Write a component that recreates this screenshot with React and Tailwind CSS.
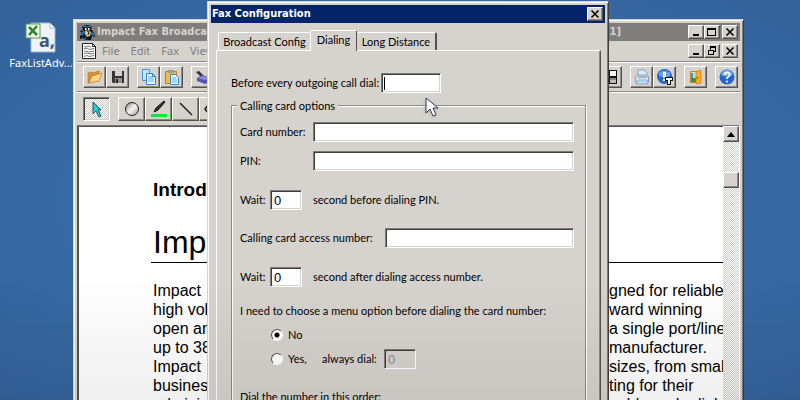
import React from 'react';

const raised = 'border border-t-white border-l-white border-r-[#55524f] border-b-[#55524f] shadow-[inset_-1px_-1px_0_#8c8986] bg-[#d6d3ce]';
const sunken = 'border border-t-[#7d7a78] border-l-[#7d7a78] border-r-white border-b-white shadow-[inset_1px_1px_0_#403d3d,inset_-1px_-1px_0_#d6d3ce]';
const dialogText = "font-['Lato','Liberation_Sans',sans-serif] text-[11px] leading-4 whitespace-nowrap";
const titleText = "font-['DejaVu_Sans_Condensed','DejaVu_Sans',sans-serif] text-[11px] font-bold";
const checker = 'bg-[repeating-conic-gradient(#ffffff_0_25%,#cfccc7_0_50%)] bg-[length:2px_2px]';

const leftLines = ['Impact', 'high volume', 'open and', 'up to 384', 'Impact', 'business', 'administrative'];
const rightLines = ['gned for reliable', 'ward winning', 'a single port/line', 'manufacturer.', 'sizes, from small', 'ting for their', 'eable and reliable'];

function WindowButton({ label, children }) {
  return (
    <button aria-label={label} className={`flex h-[14px] w-4 items-center justify-center ${raised}`}>
      <svg width="12" height="12" viewBox="0 0 12 12" fill="none" stroke="#000" shapeRendering="crispEdges">{children}</svg>
    </button>
  );
}

const minimize = <path d="M3 9h6" strokeWidth="2" />;
const maximize = <path d="M1 2h9M1.5 2v8M9.5 2v8M1 9.5h9M1 3h9" />;
const restore = <path d="M4 1.5h6M4 2.5h6M4.5 2v3M9.5 2v5M8 6.500h2M2 5.5h6M2.500 5v5M7.500 5v5M2 9.500h6" />;
const cross = <path d="M2.500 2.500l7 7M9.500 2.500l-7 7" strokeWidth="1.600" shapeRendering="auto" />;

function ToolButton({ label, children }) {
  return (
    <button aria-label={label} className={`flex h-[22px] w-[23px] shrink-0 items-center justify-center ${raised}`}>
      <svg width="16" height="16" viewBox="0 0 16 16">{children}</svg>
    </button>
  );
}

function DrawButton({ label, active, children }) {
  return (
    <button aria-label={label} className={`flex h-6 w-[27px] shrink-0 items-center justify-center ${active ? `${sunken} ${checker}` : raised}`}>
      <svg width="18" height="18" viewBox="0 0 18 18">{children}</svg>
    </button>
  );
}

function Document() {
  return (
    <div className="flex min-h-0 grow border border-t-[#7d7a78] border-l-[#55524f] border-r-white border-b-white bg-white shadow-[inset_1px_1px_0_#55524f]">
      <div className="min-w-0 grow overflow-hidden pt-[54px] pl-[75px] font-['Liberation_Sans',Arial,sans-serif] text-black">
        <h2 className="text-[19px] leading-5 font-bold">Introduction</h2>
        <h1 className="-ml-0.5 mt-[25px] border-b border-black pb-[3px] pl-0.5 text-[32px] leading-[34px]">Impact Fax</h1>
        <div className="mt-[18px] flex whitespace-nowrap text-base leading-[19px]">
          <div className="w-[456px] shrink-0">
            {leftLines.map((line, i) => <p key={i}>{line}</p>)}
          </div>
          <div>
            {rightLines.map((line, i) => <p key={i}>{line}</p>)}
          </div>
        </div>
      </div>
      <div className={`flex w-4 shrink-0 flex-col ${checker}`}>
        <button aria-label="Scroll up" className={`flex h-4 w-4 items-center justify-center ${raised}`}>
          <svg width="8" height="5" viewBox="0 0 8 5"><path d="M4 0l4 5H0z" /></svg>
        </button>
        <div className={`mt-[30px] h-4 w-4 ${raised}`} />
      </div>
    </div>
  );
}

function FaxWindow() {
  return (
    <div className="absolute top-[19px] right-14 -bottom-6 left-[73px] flex flex-col border border-t-[#d6d3ce] border-l-[#d6d3ce] border-r-[#403d3d] border-b-[#403d3d] bg-[#d6d3ce] p-[3px] shadow-[inset_1px_1px_0_#fff,inset_-1px_-1px_0_#7d7a78]">
      <div className={`flex h-[18px] shrink-0 items-center bg-[#807d7d] pl-0.5 text-[#d6d3ce] ${titleText}`}>
        <svg width="17" height="17" viewBox="0 0 17 17" className="mr-px">
          <path d="M3 2l5-1 5 1-1 3 3 4 1 4-3-1-1 4H6l-2-2-3 1 0-3 2-2-2-3 3-1z" fill="#0b1722" />
          <path d="M2 9l3-3 1 3-3 3zM12 8l3 1v3l-3-1zM6 13l2 2-3 1z" fill="#1472b8" />
          <path d="M6 4h2v2H6zM9 4h2v2H9z" fill="#fff" />
          <path d="M6 7l3-1 3 2-1 4-3 1-2-3z" fill="#dbc779" />
          <path d="M8 7l2 1-1 3M7 5h1M10 5h1" stroke="#141414" fill="none" />
          <path d="M3 2l5 1 5-1" stroke="#3e87aa" fill="none" />
        </svg>
        <span className="grow whitespace-nowrap">Impact Fax Broadcast</span>
        <span className="mr-[67px]">[1]</span>
        <div className="mr-0.5 flex">
          <WindowButton label="Minimize">{minimize}</WindowButton>
          <WindowButton label="Maximize">{maximize}</WindowButton>
          <span className="w-0.5" />
          <WindowButton label="Close">{cross}</WindowButton>
        </div>
      </div>
      <div className="flex h-[21px] shrink-0 items-center border-b border-[#8c8986] pl-[5px] font-['Noto_Sans',sans-serif] text-[11px] text-[#807d7d]">
        <svg width="14" height="16" viewBox="0 0 14 16" className="mr-[6px]">
          <path d="M.5.5h10l3 3v12H.5z" fill="#fff" stroke="#222" />
          <path d="M10.500.5v3h3" fill="none" stroke="#222" />
          <path d="M2 3.500l2 .5 2-1 3 1M2 6l3-1 2 1.500 5-1M2 8.500l2-.5 3 1 5-1M2 11l3-1 3 1 4-1M2 13.500l3-1 2 1 5-1" fill="none" stroke="#777" />
        </svg>
        <button className="mr-[11px]">File</button>
        <button className="mr-[11px]">Edit</button>
        <button className="mr-[11px]">Fax</button>
        <button>View</button>
        <div className="mr-0.5 ml-auto flex">
          <WindowButton label="Minimize document">{minimize}</WindowButton>
          <WindowButton label="Restore document">{restore}</WindowButton>
          <span className="w-0.5" />
          <WindowButton label="Close document">{cross}</WindowButton>
        </div>
      </div>
      <div className="flex h-[30px] shrink-0 items-center border-t border-b border-t-white border-b-[#8c8986] pr-0.5 pl-[6px]">
        <ToolButton label="Open">
          <path d="M1 4l4-1 1 1 6-2v3l-8 2-2 7H1z" fill="#d89632" stroke="#a96e20" strokeWidth=".6" />
          <path d="M2 14L5 7l10-3-3 8z" fill="#ffd58b" stroke="#c27d20" strokeWidth=".8" />
        </ToolButton>
        <ToolButton label="Save">
          <path d="M2 2h12v12H3l-1-1z" fill="#343434" />
          <path d="M5 2h7v5H5z" fill="#d1d1d1" /><path d="M5 9h7v5H5z" fill="#919191" /><path d="M6 10h2v4H6z" fill="#222" />
        </ToolButton>
        <span className="w-2" />
        <ToolButton label="Copy">
          <path d="M1.500.5h7v11h-7z" fill="#bfe4fb" stroke="#489ad2" />
          <path d="M5.500 4.500h6l3 3v8h-9z" fill="#e1f4ff" stroke="#2d86cc" />
          <path d="M7 8h5M7 10h6M7 12h6" stroke="#69afe0" /><path d="M11.500 4.500v3h3" fill="none" stroke="#2d86cc" />
        </ToolButton>
        <ToolButton label="Paste">
          <path d="M1.500 2.500h11v12h-11z" fill="#f4b93e" stroke="#b8822a" />
          <path d="M4 1h6v3H4z" fill="#8e9bad" />
          <path d="M6.500 5.500h5l3 3v7h-8z" fill="#e1f4ff" stroke="#3687c9" /><path d="M8 9h4M8 11h5M8 13h5" stroke="#69afe0" />
        </ToolButton>
        <span className="w-2" />
        <ToolButton label="Send fax">
          <path d="M1 3l3-1 5 5-2 2z" fill="#333" /><path d="M2 9l5-3 9 3v4l-6 2-8-3z" fill="#5755b0" /><path d="M3 9l5-2 6 2-4 2z" fill="#918fd6" /><path d="M12 12h2v1h-2z" fill="#e33" />
        </ToolButton>
        <span className="grow" />
        <ToolButton label="Contrast">
          <path d="M5 1h9v14H5z" fill="#111" /><path d="M7 2h6v5H7z" fill="#fff" /><path d="M7 9h6v2H7z" fill="#888" /><path d="M7 11h6v3H7z" fill="#bbb" />
        </ToolButton>
        <span className="w-2" />
        <ToolButton label="Print">
          <path d="M4 8V1h6l3 3v4" fill="#d8edff" stroke="#7da9d1" /><path d="M1.500 8l2-2h9l2 2v5h-13z" fill="#dce3e9" stroke="#8a99a9" />
          <path d="M4 8h9" stroke="#6683a2" /><path d="M4 11h9l1 4H2z" fill="#b6dcf8" stroke="#7b98b1" strokeWidth=".7" />
        </ToolButton>
        <ToolButton label="Fax information">
          <circle cx="7.500" cy="7.500" r="7.500" fill="#2868ca" /><path d="M2 4q5-5 11 0v3q-5 2-11 0z" fill="#6aa6ee" />
          <path d="M6 3h3v6H6zM6 10h3v2H6z" fill="#fff" /><path d="M8 8h8v4h-2v4h-4v-4H8z" fill="#111" /><path d="M9 9h6v2h-2v4h-2v-4H9z" fill="#fff" />
        </ToolButton>
        <span className="w-2" />
        <ToolButton label="Exit">
          <path d="M2.500 2.500h7v11h-7z" fill="#b9e3ef" stroke="#c78622" /><path d="M3 9h5v4H3z" fill="#37983c" /><path d="M3 4h2v5H3z" fill="#478fcf" />
          <path d="M8 3l5-2v13l-5 1z" fill="#ffad1d" stroke="#c47a0d" strokeWidth=".7" /><path d="M9 8h1v2H9z" fill="#794900" />
        </ToolButton>
        <span className="w-2" />
        <ToolButton label="Help">
          <circle cx="8" cy="8" r="7.500" fill="#2566ca" /><path d="M2 6q1-5 6-5t6 5q-6 3-12 0z" fill="#71a8eb" />
          <path d="M5.500 6q0-2.500 2.600-2.500t2.500 2.200q0 1.300-1.400 2T8 10" fill="none" stroke="#fff" strokeWidth="1.800" /><circle cx="8" cy="12.500" r="1.100" fill="#fff" />
        </ToolButton>
      </div>
      <div className="flex h-[33px] shrink-0 items-center border-t border-white pl-[6px]">
        <DrawButton label="Select" active>
          <path d="M5 2v12l3-3 3 6 2-1-3-6h3z" fill="#29cbd5" stroke="#24575d" />
        </DrawButton>
        <span className="w-2" />
        <DrawButton label="Ellipse">
          <defs><linearGradient id="metal" x2="1" y2="1"><stop stopColor="#777" /><stop offset=".5" stopColor="#f4f4f4" /><stop offset="1" stopColor="#999" /></linearGradient></defs>
          <circle cx="9" cy="9" r="6.500" fill="url(#metal)" stroke="#222" />
        </DrawButton>
        <DrawButton label="Highlighter">
          <path d="M4 12l2-4 8-7 1 1-7 8z" fill="#333" stroke="#111" /><path d="M1 14h16v3H1z" fill="#00ec42" />
        </DrawButton>
        <DrawButton label="Line"><path d="M3 3l12 12" stroke="#222" strokeWidth="1.500" /></DrawButton>
        <DrawButton label="Polygon"><path d="M5 4L1 9l4 5 8-1 2-7z" fill="#ffe79b" stroke="#111" strokeWidth="1.500" /></DrawButton>
      </div>
      <Document />
    </div>
  );
}

function Field({ label, width, ...props }) {
  return <input aria-label={label} className={`h-5 px-[3px] font-['Liberation_Sans',sans-serif] text-[13px] outline-none disabled:text-[#8c8986] ${width} ${sunken} ${props.disabled ? 'bg-[#d6d3ce]' : 'bg-white'}`} {...props} />;
}

function Radio({ id, ...props }) {
  return (
    <input type="radio" name="menu" id={id} className="h-3 w-3 appearance-none rounded-full border border-t-[#55524f] border-l-[#55524f] border-r-white border-b-white bg-white checked:bg-[radial-gradient(circle,#000_2px,#fff_3px)]" {...props} />
  );
}

function ConfigDialog() {
  return (
    <div role="dialog" aria-label="Fax Configuration" className={`absolute top-px -bottom-6 left-[207px] flex w-[402px] flex-col overflow-hidden border border-t-[#d6d3ce] border-l-[#d6d3ce] border-r-[#403d3d] border-b-[#403d3d] bg-[#d6d3ce] p-[3px] text-black shadow-[inset_1px_1px_0_#fff,inset_-1px_-1px_0_#7d7a78] ${dialogText}`}>
      <div className={`flex h-[18px] shrink-0 items-center justify-between bg-[#04246a] pr-0.5 pl-px text-white ${titleText}`}>
        Fax Configuration
        <WindowButton label="Close dialog">{cross}</WindowButton>
      </div>
      <div role="tablist" className="mt-[7px] flex shrink-0 items-end pl-[7px]">
        <button role="tab" className="h-[18px] w-[92px] rounded-t-[2px] border-t border-l border-white">Broadcast Config</button>
        <button role="tab" aria-selected="true" className="relative -mb-px h-[21px] w-[47px] rounded-t-[2px] border border-t-white border-l-white border-r-[#55524f] border-b-0 bg-[#d6d3ce] pb-[3px]">Dialing</button>
        <button role="tab" className="h-[18px] w-20 rounded-t-[2px] border-t border-r-2 border-white border-r-[#55524f]">Long Distance</button>
      </div>
      <div className="mr-1 ml-[5px] grow border border-t-white border-l-white border-r-[#55524f] border-b-[#55524f] pt-[22px] pr-[14px] pl-[14px] shadow-[inset_-1px_0_0_#8c8986]">
        <label className="relative flex items-center">
          <span className="w-[150px]">Before every outgoing call dial:</span>
          <Field width="w-[60px]" />
          <span className="absolute left-[153px] h-[13px] w-px bg-black" />
        </label>
        <fieldset className="relative mt-[12px] h-[340px] border border-[#8c8986] px-2 shadow-[1px_1px_0_#fff,inset_1px_1px_0_#fff]">
          <legend className="absolute -top-2 left-[5px] bg-[#d6d3ce] px-[3px]">Calling card options</legend>
          <div className="mt-4 flex flex-col gap-[9px]">
            <label className="flex items-center"><span className="w-[73px]">Card number:</span><Field width="w-[261px]" /></label>
            <label className="flex items-center"><span className="w-[73px]">PIN:</span><Field width="w-[261px]" /></label>
          </div>
          <div className="mt-[19px] flex items-center">
            <label className="flex items-center"><span className="w-[30px]">Wait:</span><Field width="w-8" defaultValue="0" /></label>
            <span className="ml-[11px]">second before dialing PIN.</span>
          </div>
          <label className="mt-[18px] flex items-center"><span className="w-[145px]">Calling card access number:</span><Field width="w-[189px]" /></label>
          <div className="mt-[19px] flex items-center">
            <label className="flex items-center"><span className="w-[30px]">Wait:</span><Field width="w-8" defaultValue="0" /></label>
            <span className="ml-[11px]">second after dialing access number.</span>
          </div>
          <p className="mt-4">I need to choose a menu option before dialing the card number:</p>
          <div className="mt-2 flex h-4 items-center gap-[5px] pl-[31px]">
            <Radio id="menu-no" defaultChecked /><label htmlFor="menu-no">No</label>
          </div>
          <div className="mt-[6px] flex h-5 items-center pl-[31px]">
            <Radio id="menu-yes" /><label htmlFor="menu-yes" className="ml-[5px] w-[34px]">Yes,</label>
            <label className="flex items-center"><span className="w-[62px]">always dial:</span><Field width="w-8" defaultValue="0" disabled /></label>
          </div>
          <p className="mt-[20px]">Dial the number in this order:</p>
        </fieldset>
      </div>
    </div>
  );
}

export default function App() {
  return (
    <div className="relative h-screen overflow-hidden bg-[radial-gradient(ellipse_at_center,#3a70aa_40%,#33619a_100%)]">
      <div className="absolute top-[22px] left-[9px] flex w-16 flex-col items-center">
        <svg width="32" height="32" viewBox="0 0 32 32">
          <path d="M6 1h19l5 5v24H6z" fill="#eef3fa" stroke="#9eb6d1" /><path d="M25 1v5h5" fill="#fff" stroke="#9eb6d1" />
          <path d="M1 2h14v14H1z" fill="#edf7e8" stroke="#5b9b4b" /><path d="M4 5l8 8M12 4l-8 9" stroke="#348330" strokeWidth="2.500" />
          <text x="14" y="25" fontFamily="Noto Sans" fontSize="18" fontWeight="bold" fill="#3c5678">a,</text>
        </svg>
        <span className="font-['Noto_Sans',sans-serif] text-[11px] leading-[18px] text-white">FaxListAdv...</span>
      </div>
      <FaxWindow />
      <ConfigDialog />
      <svg width="14" height="20" viewBox="0 0 14 20" className="absolute top-[97px] left-[425px] drop-shadow">
        <path d="M1 1v15l4-4 3 7 3-1-3-7h5z" fill="#fff" stroke="#353b55" />
      </svg>
      <div className="pointer-events-none absolute inset-x-0 bottom-0 h-32 bg-gradient-to-b from-transparent to-black/6" />
    </div>
  );
}
